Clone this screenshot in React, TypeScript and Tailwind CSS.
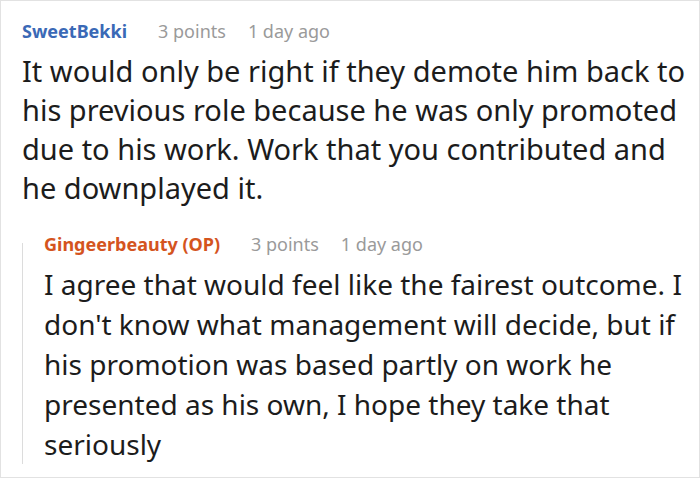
export default function App() {
  return (
    <div
      className="w-[700px] h-[478px] border border-[#e2e2e2] bg-white pl-[21px] pt-[17px] text-[#1c1c1c]"
      style={{ fontFamily: '"Noto Sans", "Open Sans", sans-serif' }}
    >
      <div className="flex items-center h-[26px] text-[18px]">
        <span className="font-bold text-[#3a69b6]">SweetBekki</span>
        <span className="ml-[31px] text-[#9a9a9a]">3 points</span>
        <span className="ml-[22px] text-[#9a9a9a]">1 day ago</span>
      </div>
      <p className="mt-[7px] text-[29px] leading-[39px] pr-[10px]">
        It would only be right if they demote him back to his previous role
        because he was only promoted due to his work. Work that you contributed
        and he downplayed it.
      </p>
      <div className="mt-[24px] flex flex-col">
        <div className="flex items-center h-[26px] pl-[22px] text-[18px]">
          <span className="font-bold text-[#d4541e]">Gingeerbeauty (OP)</span>
          <span className="ml-[31px] text-[#9a9a9a]">3 points</span>
          <span className="ml-[22px] text-[#9a9a9a]">1 day ago</span>
        </div>
        <div className="border-l border-[#dcdcdc] pl-[21px] -mt-[14px] pt-[21px]">
          <p className="text-[28px] leading-[40px]">
            I agree that would feel like the fairest outcome. I don't know what
            management will decide, but if his promotion was based partly on
            work he presented as his own, I hope they take that seriously
          </p>
        </div>
      </div>
    </div>
  );
}
